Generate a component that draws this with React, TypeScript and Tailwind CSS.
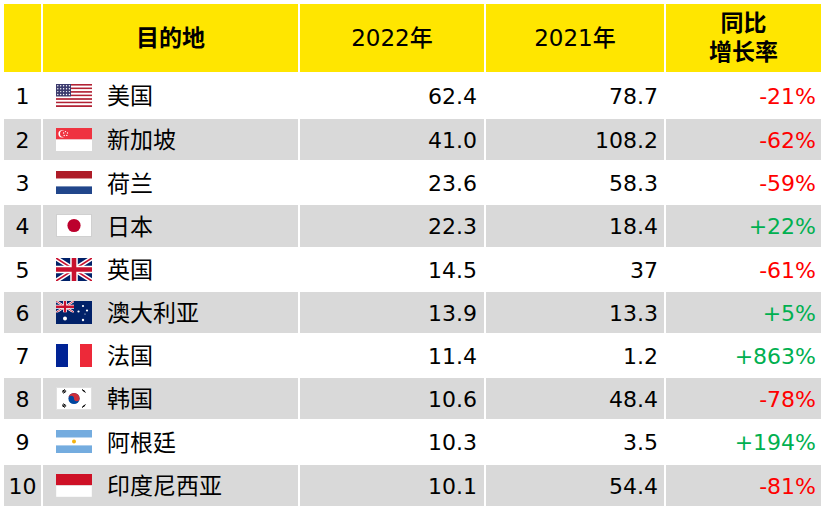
import React from "react"

const font = { fontFamily: '"DejaVu Sans", "Noto Sans CJK SC", sans-serif' }

function UsFlag() {
  return (
    <svg width="36" height="23" viewBox="0 0 36 23">
      {Array.from({ length: 13 }).map((_, i) => (
        <rect key={i} x="0" y={(i * 23) / 13} width="36" height={23 / 13} fill={i % 2 === 0 ? "#B22234" : "#FFFFFF"} />
      ))}
      <rect x="0" y="0" width="15" height="12.4" fill="#3C3B6E" />
      {Array.from({ length: 4 }).map((_, r) =>
        Array.from({ length: 5 }).map((_, c) => (
          <circle key={`${r}-${c}`} cx={1.8 + c * 2.9} cy={1.8 + r * 2.9} r="0.7" fill="#fff" />
        ))
      )}
    </svg>
  )
}

function SgFlag() {
  return (
    <svg width="36" height="23" viewBox="0 0 36 23">
      <rect width="36" height="11.5" fill="#EF3340" />
      <rect y="11.5" width="36" height="11.5" fill="#FFFFFF" />
      <circle cx="6" cy="5.8" r="3.6" fill="#fff" />
      <circle cx="7.3" cy="5.8" r="3.3" fill="#EF3340" />
      <circle cx="9.5" cy="3.6" r="0.7" fill="#fff" />
      <circle cx="11.5" cy="5" r="0.7" fill="#fff" />
      <circle cx="10.8" cy="7.4" r="0.7" fill="#fff" />
      <circle cx="8.2" cy="7.4" r="0.7" fill="#fff" />
      <circle cx="7.6" cy="5" r="0.7" fill="#fff" />
    </svg>
  )
}

function NlFlag() {
  return (
    <svg width="36" height="23" viewBox="0 0 36 23">
      <rect width="36" height="7.7" fill="#AE1C28" />
      <rect y="7.7" width="36" height="7.7" fill="#FFFFFF" />
      <rect y="15.4" width="36" height="7.6" fill="#21468B" />
    </svg>
  )
}

function JpFlag() {
  return (
    <svg width="36" height="23" viewBox="0 0 36 23">
      <rect x="0.5" y="0.5" width="35" height="22" fill="#FFFFFF" stroke="#D0D0D0" strokeWidth="1" />
      <circle cx="18" cy="11.5" r="6.6" fill="#BC002D" />
    </svg>
  )
}

function UnionJack({ w, h }: { w: number; h: number }) {
  return (
    <g>
      <rect width={w} height={h} fill="#012169" />
      <path d={`M0 0L${w} ${h}M${w} 0L0 ${h}`} stroke="#FFFFFF" strokeWidth={h * 0.2} />
      <path d={`M0 0L${w} ${h}M${w} 0L0 ${h}`} stroke="#C8102E" strokeWidth={h * 0.07} />
      <path d={`M${w / 2} 0V${h}M0 ${h / 2}H${w}`} stroke="#FFFFFF" strokeWidth={h * 0.33} />
      <path d={`M${w / 2} 0V${h}M0 ${h / 2}H${w}`} stroke="#C8102E" strokeWidth={h * 0.2} />
    </g>
  )
}

function UkFlag() {
  return (
    <svg width="36" height="23" viewBox="0 0 36 23">
      <UnionJack w={36} h={23} />
    </svg>
  )
}

function AuFlag() {
  return (
    <svg width="36" height="23" viewBox="0 0 36 23">
      <rect width="36" height="23" fill="#012169" />
      <svg x="0" y="0" width="18" height="11.5" viewBox="0 0 18 11.5">
        <UnionJack w={18} h={11.5} />
      </svg>
      <circle cx="9" cy="17.5" r="2" fill="#fff" />
      <circle cx="27" cy="5" r="1.1" fill="#fff" />
      <circle cx="22.5" cy="10.5" r="1.1" fill="#fff" />
      <circle cx="31" cy="9.5" r="1.1" fill="#fff" />
      <circle cx="27" cy="19" r="1.2" fill="#fff" />
      <circle cx="29" cy="13" r="0.6" fill="#fff" />
    </svg>
  )
}

function FrFlag() {
  return (
    <svg width="36" height="23" viewBox="0 0 36 23">
      <rect width="12" height="23" fill="#002395" />
      <rect x="12" width="12" height="23" fill="#FFFFFF" />
      <rect x="24" width="12" height="23" fill="#ED2939" />
    </svg>
  )
}

function KrFlag() {
  return (
    <svg width="36" height="23" viewBox="0 0 36 23">
      <rect x="0.5" y="0.5" width="35" height="22" fill="#FFFFFF" stroke="#E0E0E0" strokeWidth="1" />
      <circle cx="18" cy="11.5" r="5.6" fill="#0047A0" />
      <path d="M12.4 11.5A5.6 5.6 0 0 1 23.6 11.5A2.8 2.8 0 0 1 18 11.5A2.8 2.8 0 0 0 12.4 11.5Z" fill="#CD2E3A" />
      <g stroke="#000" strokeWidth="1">
        <path d="M6 4.5L9 2.5M6.6 5.4L9.6 3.4M7.2 6.3L10.2 4.3" />
        <path d="M26 2.5L29 4.5M26.6 3.4L29.6 5.4" />
        <path d="M26 20.5L29 18.5M26.6 19.6L29.6 17.6" />
        <path d="M6 18.5L9 20.5M6.6 17.6L9.6 19.6M7.2 16.7L10.2 18.7" />
      </g>
    </svg>
  )
}

function ArFlag() {
  return (
    <svg width="36" height="23" viewBox="0 0 36 23">
      <rect width="36" height="7.7" fill="#74ACDF" />
      <rect y="7.7" width="36" height="7.7" fill="#FFFFFF" />
      <rect y="15.4" width="36" height="7.6" fill="#74ACDF" />
      <circle cx="18" cy="11.5" r="2" fill="#F6B40E" />
    </svg>
  )
}

function IdFlag() {
  return (
    <svg width="36" height="23" viewBox="0 0 36 23">
      <rect width="36" height="11.5" fill="#CE1126" />
      <rect y="11.5" width="36" height="11.5" fill="#FFFFFF" stroke="#E6E6E6" strokeWidth="0.6" />
    </svg>
  )
}

const rows = [
  { name: "美国", flag: <UsFlag />, y22: "62.4", y21: "78.7", chg: "-21%" },
  { name: "新加坡", flag: <SgFlag />, y22: "41.0", y21: "108.2", chg: "-62%" },
  { name: "荷兰", flag: <NlFlag />, y22: "23.6", y21: "58.3", chg: "-59%" },
  { name: "日本", flag: <JpFlag />, y22: "22.3", y21: "18.4", chg: "+22%" },
  { name: "英国", flag: <UkFlag />, y22: "14.5", y21: "37", chg: "-61%" },
  { name: "澳大利亚", flag: <AuFlag />, y22: "13.9", y21: "13.3", chg: "+5%" },
  { name: "法国", flag: <FrFlag />, y22: "11.4", y21: "1.2", chg: "+863%" },
  { name: "韩国", flag: <KrFlag />, y22: "10.6", y21: "48.4", chg: "-78%" },
  { name: "阿根廷", flag: <ArFlag />, y22: "10.3", y21: "3.5", chg: "+194%" },
  { name: "印度尼西亚", flag: <IdFlag />, y22: "10.1", y21: "54.4", chg: "-81%" },
]

const cols = "grid grid-cols-[37px_255px_184px_178px_155px] gap-x-[2px]"

export default function App() {
  return (
    <div className="w-[826px] h-[511px] bg-white pt-[4px] pl-[4px] text-[22px] text-black overflow-hidden" style={font}>
      <div className="flex flex-col gap-y-[2px]">
        {/* Header */}
        <div className={`${cols} h-[68px] text-[23px]`}>
          <div className="bg-[#FFE600]" />
          <div className="bg-[#FFE600] flex items-center justify-center font-bold">目的地</div>
          <div className="bg-[#FFE600] flex items-center justify-center font-medium">2022年</div>
          <div className="bg-[#FFE600] flex items-center justify-center font-medium">2021年</div>
          <div className="bg-[#FFE600] flex flex-col items-center justify-center font-bold leading-[29px]">
            <span>同比</span>
            <span>增长率</span>
          </div>
        </div>

        {rows.map((r, i) => {
          const bg = i % 2 === 1 ? "bg-[#D9D9D9]" : "bg-white"
          const h = i === 0 ? "h-[43px]" : "h-[41.2px]"
          const color = r.chg.startsWith("+") ? "text-[#00B050]" : "text-[#FF0000]"
          return (
            <div key={r.name} className={`${cols} ${h}`}>
              <div className={`${bg} flex items-center justify-center pt-[2px]`}>{i + 1}</div>
              <div className={`${bg} flex items-center pl-[13px] gap-[15px]`}>
                {r.flag}
                <span className="text-[23px] pt-[2px]">{r.name}</span>
              </div>
              <div className={`${bg} flex items-center justify-end pr-[7px] pt-[2px]`}>{r.y22}</div>
              <div className={`${bg} flex items-center justify-end pr-[6px] pt-[2px]`}>{r.y21}</div>
              <div className={`${bg} ${color} flex items-center justify-end pr-[5px] pt-[2px]`}>{r.chg}</div>
            </div>
          )
        })}
      </div>
    </div>
  )
}
